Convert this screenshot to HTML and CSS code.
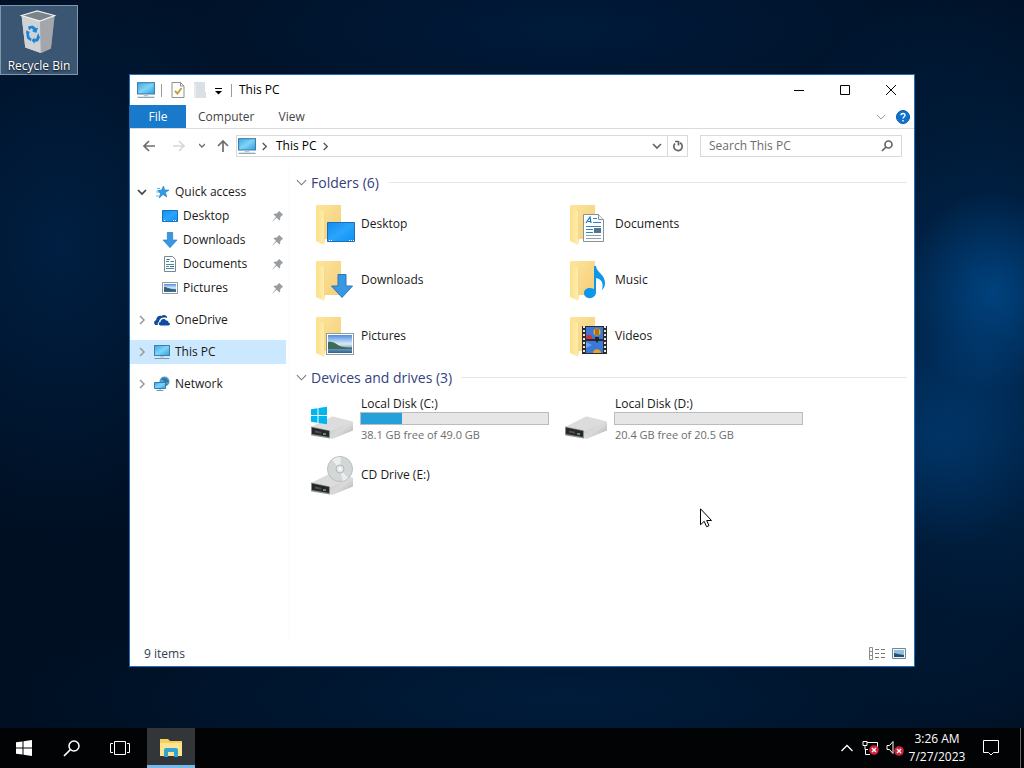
FILE: index.html
```
<!DOCTYPE html>
<html lang="en">
  <head>
    <meta charset="UTF-8" />
    <meta name="viewport" content="width=device-width, initial-scale=1.0" />
    <title>This PC</title>
    <link rel="stylesheet" href="styles.css">
  </head>
  <body>
    <!-- shared icons -->
    <svg class="sprite" aria-hidden="true">
      <defs>
        <linearGradient id="g-screen" x1="0" y1="0" x2="1" y2="1">
          <stop offset="0" stop-color="#3aa9e6" />
          <stop offset="0.5" stop-color="#7fd3f8" />
          <stop offset="1" stop-color="#2f9fe0" />
        </linearGradient>
        <linearGradient id="g-front" x1="0" y1="0" x2="1" y2="0">
          <stop offset="0" stop-color="#fbe08a" />
          <stop offset="1" stop-color="#feecac" />
        </linearGradient>
        <linearGradient id="g-back" x1="0" y1="0" x2="1" y2="1">
          <stop offset="0" stop-color="#fde59c" />
          <stop offset="1" stop-color="#f3cd7a" />
        </linearGradient>
        <linearGradient id="g-desk" x1="0" y1="0" x2="1" y2="1">
          <stop offset="0" stop-color="#0f8df0" />
          <stop offset="0.5" stop-color="#2ba4fb" />
          <stop offset="1" stop-color="#0d92f5" />
        </linearGradient>
        <linearGradient id="g-sky" x1="0" y1="0" x2="0" y2="1">
          <stop offset="0" stop-color="#4f8ede" />
          <stop offset="0.5" stop-color="#dcebf7" />
          <stop offset="0.75" stop-color="#6f9cc0" />
          <stop offset="1" stop-color="#2f618f" />
        </linearGradient>
        <linearGradient id="g-drive" x1="0" y1="0" x2="1" y2="1">
          <stop offset="0" stop-color="#c6c6c6" />
          <stop offset="0.5" stop-color="#dadada" />
          <stop offset="1" stop-color="#a9a9a9" />
        </linearGradient>
        <linearGradient id="g-bin" x1="0" y1="0" x2="1" y2="0">
          <stop offset="0" stop-color="#d9dcdf" />
          <stop offset="0.55" stop-color="#c3c6c9" />
          <stop offset="1" stop-color="#8f959b" />
        </linearGradient>
      </defs>

      <symbol id="i-pc" viewBox="0 0 16 16">
        <rect x="0.5" y="1.5" width="15" height="10" fill="url(#g-screen)" stroke="#3f7fa8" />
        <path d="M6 12h4v1.500H6z" fill="#b5c6d0" />
        <path d="M0.500 14.500h15" stroke="#7d99ab" />
      </symbol>

      <symbol id="i-folder" viewBox="0 0 48 48">
        <path d="M9 5h24v34H13z" fill="url(#g-back)" />
        <path d="M8 5l8 6v34L8 41z" fill="url(#g-front)" />
        <path d="M8 5l9 6v28l-1 6V11z" fill="#f6d885" />
      </symbol>

      <symbol id="i-drive" viewBox="0 0 48 48">
        <path d="M3 32L23 22c1-.5 2-.5 3-.3L43 26c2 .6 2 1 2 2L22 36z" fill="#dcdcdc" />
        <path d="M22 36l23-9v8.500L24 44l-2-1z" fill="url(#g-drive)" />
        <path d="M3 31.500L22 35.500v8L4 40.500q-1 0-1-1z" fill="#8c8e8e" />
        <path d="M4 32.500l17 3.500v6l-17-3z" fill="#24282a" />
        <path d="M15 39h3" stroke="#b7e0c0" />
        <path d="M7 35.500l6 1.300v2L7 37.600z" fill="#4b5052" />
      </symbol>

      <symbol id="i-down" viewBox="0 0 24 24">
        <path d="M8 .5h8V12h6.500L12 23.500 1.500 12H8z" fill="#3a97e4" stroke="#2a76bb" />
      </symbol>

      <symbol id="i-photo" viewBox="0 0 28 22">
        <rect x="0.5" y="0.5" width="27" height="21" fill="#fff" stroke="#8f9aa3" />
        <rect x="2" y="2" width="24" height="18" fill="url(#g-sky)" />
        <path d="M2 9c4-1 7 1 10 3s7 2.500 14 2.500V16H2z" fill="#3c6b58" />
      </symbol>

      <symbol id="i-pin" viewBox="0 0 12 12">
        <path d="M7 .7L11.300 5l-1.200.3-1.800 1.900-.2 2.600-.9.400L4.700 7.700.8 11.200.5 11l3.500-4-2.300-2.400.4-.9 2.600-.1L6.600 1.800z" fill="#979da2" />
      </symbol>

      <symbol id="i-right" viewBox="0 0 10 10">
        <path d="M3 1l4 4-4 4" fill="none" stroke="currentColor" stroke-width="1.500" />
      </symbol>

      <symbol id="i-chev" viewBox="0 0 12 12">
        <path d="M1 3.500l5 5 5-5" fill="none" stroke="currentColor" stroke-width="1.200" />
      </symbol>

      <symbol id="i-lens" viewBox="0 0 18 18">
        <circle cx="11" cy="7" r="5" fill="none" stroke="currentColor" stroke-width="1.500" />
        <path d="M7.500 10.500L1 17" stroke="currentColor" stroke-width="1.700" />
      </symbol>

      <symbol id="i-error" viewBox="0 0 10 10">
        <circle cx="5" cy="5" r="4.800" fill="#d0213c" />
        <path d="M3 3l4 4M7 3L3 7" stroke="#fff" stroke-width="1.300" />
      </symbol>
    </svg>

    <main class="desktop">
      <a class="shortcut" href="#">
        <svg viewBox="0 0 48 48">
          <path d="M5 6L22 1l19 5-4 36-11 5-17-6z" fill="url(#g-bin)" />
          <path d="M5 6l20 6 1 35-17-6z" fill="#d0d3d6" />
          <path d="M25 12l16-6-4 36-11 5z" fill="#a3a7ab" />
          <path d="M5 6L22 1l19 5-16 6z" fill="#7b8288" stroke="#eef0f1" stroke-width="1.300" />
          <g fill="#1c83d8">
            <path d="M12 18l5-1 4 3 2-1-2 6-5-2 2-1-2-2-3 2z" />
            <path d="M10 22l4 2-1 2 1 4 2 1-1 3-4-3-1-6z" />
            <path d="M23 25l2 5-2 4-4 1v2l-3-4 3-3v2l2-1z" />
          </g>
        </svg>
        <span>Recycle Bin</span>
      </a>

      <section class="window">
        <header class="titlebar">
          <svg class="pc-icon"><use href="#i-pc" /></svg>
          <span class="divider"></span>
          <button class="quick" aria-label="Properties">
            <svg width="14" height="16" viewBox="0 0 14 16">
              <path d="M1 .5h8.500l3.500 3.500v11.500H1z" fill="#fdfdfd" stroke="#8f8f8f" />
              <path d="M9.500.5V4H13" fill="none" stroke="#8f8f8f" />
              <path d="M4 9l2.500 2.500L10.500 6" fill="none" stroke="#c79a3c" stroke-width="1.800" />
            </svg>
          </button>
          <button class="quick" aria-label="New folder">
            <svg width="14" height="16" viewBox="0 0 14 16">
              <path d="M1 0h11v10h1v6H1z" fill="#d9e0e6" />
              <path d="M1 1.500l2 1V16H1z" fill="#e6ebef" />
            </svg>
          </button>
          <button class="quick narrow" aria-label="Customize toolbar">
            <svg width="7" height="7" viewBox="0 0 7 7">
              <path d="M0 .5h7" stroke="#000" />
              <path d="M0 3h7L3.500 6.500z" />
            </svg>
          </button>
          <span class="divider"></span>
          <h1>This PC</h1>
          <div class="controls">
            <button aria-label="Minimize">
              <svg width="10" height="10"><path d="M0 5.500h10" /></svg>
            </button>
            <button aria-label="Maximize">
              <svg width="10" height="10"><path d="M.5.5h9v9h-9z" /></svg>
            </button>
            <button aria-label="Close">
              <svg width="10" height="10"><path d="M0 0l10 10M10 0L0 10" /></svg>
            </button>
          </div>
        </header>

        <nav class="ribbon">
          <button class="file">File</button>
          <button>Computer</button>
          <button>View</button>
          <div class="ribbon-end">
            <svg class="expand" width="10" height="10"><use href="#i-chev" /></svg>
            <svg width="14" height="14" viewBox="0 0 14 14">
              <circle cx="7" cy="7" r="6.500" fill="#0c74cf" stroke="#0b5aa3" />
              <path d="M5 5.300C5 2.800 9.200 2.900 9 5.300 8.900 6.800 7 6.800 7 8.600M7 10v1.500" fill="none" stroke="#fff" stroke-width="1.400" />
            </svg>
          </div>
        </nav>

        <div class="toolbar">
          <button class="go" aria-label="Back">
            <svg width="12" height="12"><path d="M12 6H1M6 1L1 6l5 5" /></svg>
          </button>
          <button class="go off" aria-label="Forward" disabled>
            <svg width="12" height="12"><path d="M0 6h11M6 1l5 5-5 5" /></svg>
          </button>
          <button class="go recent" aria-label="Recent locations">
            <svg width="6" height="6"><path d="M0 1l3 3 3-3" /></svg>
          </button>
          <button class="go up" aria-label="Up">
            <svg width="12" height="12"><path d="M6 12V1M1 6l5-5 5 5" /></svg>
          </button>
          <div class="address">
            <svg class="pc-icon"><use href="#i-pc" /></svg>
            <svg class="crumb-arrow"><use href="#i-right" /></svg>
            <a href="#">This PC</a>
            <svg class="crumb-arrow"><use href="#i-right" /></svg>
            <button class="drop" aria-label="Previous locations">
              <svg width="10" height="10" viewBox="0 0 10 10"><path d="M1 3l4 4 4-4" /></svg>
            </button>
            <button class="refresh" aria-label="Refresh">
              <svg width="12" height="12" viewBox="0 0 12 12"><path d="M3 3.500A4.200 4.200 0 1 0 8 2.700M3 1.500h3.500M6.500 1v4.500" /></svg>
            </button>
          </div>
          <form class="search">
            <input type="text" placeholder="Search This PC" aria-label="Search This PC">
            <svg width="12" height="12" viewBox="0 0 12 12">
              <circle cx="7.500" cy="4.500" r="3.500" />
              <path d="M5 7L1 11" />
            </svg>
          </form>
        </div>

        <div class="content">
          <nav class="tree">
            <ul>
              <li>
                <a href="#">
                  <svg class="arrow open" viewBox="0 0 10 10"><path d="M1 3l4 4 4-4" fill="none" stroke="currentColor" stroke-width="1.700" /></svg>
                  <svg class="tree-icon" viewBox="0 0 16 16">
                    <path d="M9.500 2l1.200 3.900 4.300.2-3.500 2.500 1.300 4.400-3.800-2.400L5.200 14l1.200-4.400-2.900-3.100 4.100-.4z" fill="#2e9be2" stroke="#1d7dc2" stroke-width=".6" />
                    <path d="M3 4.500h3M2 8h3M2 12h3" stroke="#6bb8ea" />
                  </svg>
                  Quick access
                </a>
                <ul>
                  <li>
                    <a href="#">
                      <svg class="tree-icon" viewBox="0 0 16 16"><path d="M.5 2.500h15v11H.5z" fill="url(#g-desk)" stroke="#1673bd" /><path d="M2 12.500h2M11 12.500h3" stroke="#fff" stroke-dasharray="1" /></svg>
                      Desktop
                      <svg class="pin"><use href="#i-pin" /></svg>
                    </a>
                  </li>
                  <li>
                    <a href="#">
                      <svg class="tree-icon"><use href="#i-down" /></svg>
                      Downloads
                      <svg class="pin"><use href="#i-pin" /></svg>
                    </a>
                  </li>
                  <li>
                    <a href="#">
                      <svg class="tree-icon" viewBox="0 0 16 16">
                        <path d="M2.500.5h8l3 3v12h-11z" fill="#fff" stroke="#7d878e" />
                        <path d="M4 5.500h3M8.500 5.500H12M4 8.500h8M4 10.500h3M4 12.500h8" stroke="#3e8f9c" />
                        <path d="M4.500 3.500h3M8 10.500h4" stroke="#2d6591" />
                      </svg>
                      Documents
                      <svg class="pin"><use href="#i-pin" /></svg>
                    </a>
                  </li>
                  <li>
                    <a href="#">
                      <svg class="tree-icon" viewBox="0 0 16 16">
                        <path d="M.5 2.500h15v11H.5z" fill="#fff" stroke="#8f9aa3" />
                        <path d="M2 4h12v8H2z" fill="url(#g-sky)" />
                        <path d="M2 7c3 0 5 2 12 2.500V11H2z" fill="#35617a" />
                      </svg>
                      Pictures
                      <svg class="pin"><use href="#i-pin" /></svg>
                    </a>
                  </li>
                </ul>
              </li>
              <li>
                <a href="#">
                  <svg class="arrow"><use href="#i-right" /></svg>
                  <svg class="tree-icon" viewBox="0 0 16 16">
                    <path d="M1.500 13C-.5 12-.3 8.500 2.200 8.200 2 5 5 3 7.500 4c2-2 5.500-1 5.800 2C8 4.500 5 7 5 10c-1.500.5-1.500 2-1 3z" fill="#0f4b9f" />
                    <path d="M6.500 13.500C4 13 4.500 10 6.500 10 6.500 7 10.500 6 12 8.500c2-.3 2.500 1 2.300 2 2.200.3 2.200 3 0 3z" fill="#0f4b9f" />
                  </svg>
                  OneDrive
                </a>
              </li>
              <li>
                <a class="current" href="#">
                  <svg class="arrow"><use href="#i-right" /></svg>
                  <svg class="tree-icon"><use href="#i-pc" /></svg>
                  This PC
                </a>
              </li>
              <li>
                <a href="#">
                  <svg class="arrow"><use href="#i-right" /></svg>
                  <svg class="tree-icon" viewBox="0 0 16 16">
                    <circle cx="10.500" cy="5.500" r="5" fill="#5b9cc6" />
                    <path d="M7 3c3-3 7 0 8 3l-4 1-2-3zM10 8l4 0-3 2z" fill="#2d78ad" />
                    <path d="M.5 6.500h11v6H.5z" fill="url(#g-screen)" stroke="#2f7eb0" />
                    <path d="M6 13v1.500M2.500 14.500h7" stroke="#7b99ab" />
                  </svg>
                  Network
                </a>
              </li>
            </ul>
          </nav>

          <div class="files">
            <section>
              <h2><svg class="fold"><use href="#i-chev" /></svg>Folders (6)</h2>
              <div class="tiles">
                <a class="tile" href="#">
                  <svg viewBox="0 0 48 48">
                    <use href="#i-folder" />
                    <path d="M19.500 22.500h27v19h-27z" fill="url(#g-desk)" stroke="#1a6fb5" />
                    <path d="M21 40.500h4M41 40.500h5" stroke="#fff" stroke-dasharray="1" />
                  </svg>
                  Desktop
                </a>
                <a class="tile" href="#">
                  <svg viewBox="0 0 48 48">
                    <use href="#i-folder" />
                    <path d="M21.500 14.500h15l5 5v22h-20z" fill="#fff" stroke="#87939b" />
                    <path d="M36.500 14.500v5h5" fill="#e9eef1" stroke="#87939b" />
                    <path d="M24 23l4-6 1 6M26 21.500h3" fill="none" stroke="#1f6fb8" stroke-width="1.200" />
                    <path d="M31 18.500h4M31 22.500h8M24 26.500h15M24 29.500h7M24 32.500h7" stroke="#2f84c4" />
                    <path d="M24 35.500h15M24 38.500h15" stroke="#8ca2b0" />
                    <path d="M32 28h7v5h-7z" fill="#4f7784" />
                  </svg>
                  Documents
                </a>
                <a class="tile" href="#">
                  <svg viewBox="0 0 48 48">
                    <use href="#i-folder" />
                    <use href="#i-down" x="22" y="18" width="24" height="24" />
                  </svg>
                  Downloads
                </a>
                <a class="tile" href="#">
                  <svg viewBox="0 0 48 48">
                    <use href="#i-folder" />
                    <path d="M32 10h2c0 6 9 8 9 17 0 3-1 5-3 7 2-8-1-11-6-12v14c0 8-12 8-12 1 0-5 6-6 10-4z" fill="#0e97ea" />
                  </svg>
                  Music
                </a>
                <a class="tile" href="#">
                  <svg viewBox="0 0 48 48">
                    <use href="#i-folder" />
                    <use href="#i-photo" x="18" y="21" width="28" height="22" />
                  </svg>
                  Pictures
                </a>
                <a class="tile" href="#">
                  <svg viewBox="0 0 48 48">
                    <use href="#i-folder" />
                    <path d="M20 14h25v28H20z" fill="#2b2b2b" />
                    <path d="M22 14v28M43 14v28" stroke="#e8e8e8" stroke-width="2" stroke-dasharray="2" />
                    <path d="M24 15h17v12H24zM24 29h17v12H24z" fill="#3b78d8" />
                    <path d="M24 23h5l2 4h-7z" fill="#d3303b" />
                    <circle cx="35" cy="20" r="3.500" fill="#e8b21f" />
                    <path d="M34 17v6M36 17v6" stroke="#7a3010" />
                    <path d="M33 25h4v3l-2 3-2-3z" fill="#2a2320" />
                    <path d="M31 41c0-5 8-5 8 0z" fill="#e8a51f" />
                    <path d="M24 30l6 3-6 3z" fill="#6fa5ea" />
                  </svg>
                  Videos
                </a>
              </div>
            </section>

            <section>
              <h2><svg class="fold"><use href="#i-chev" /></svg>Devices and drives (3)</h2>
              <div class="tiles">
                <a class="tile" href="#">
                  <svg viewBox="0 0 48 48">
                    <use href="#i-drive" />
                    <path d="M3 14.300l6.500-1V20H3zM10.500 13.100l8.500-1.300V20h-8.500zM3 21h6.500v6.700l-6.500-1zM10.500 21H19v8.200l-8.500-1.300z" fill="#00b6ee" />
                  </svg>
                  <span class="disk">
                    Local Disk (C:)
                    <span class="usage"><span style="width: 22%"></span></span>
                    <small>38.1 GB free of 49.0 GB</small>
                  </span>
                </a>
                <a class="tile" href="#">
                  <svg viewBox="0 0 48 48"><use href="#i-drive" /></svg>
                  <span class="disk">
                    Local Disk (D:)
                    <span class="usage"><span style="width: 0%"></span></span>
                    <small>20.4 GB free of 20.5 GB</small>
                  </span>
                </a>
                <a class="tile" href="#">
                  <svg viewBox="0 0 48 48">
                    <use href="#i-drive" />
                    <circle cx="32" cy="18" r="12.500" fill="#d4d7d7" stroke="#b9bdbd" />
                    <path d="M32 18L24 9a12 12 0 0 1 9-3zM32 18l8 9a12 12 0 0 1-5 3z" fill="#eceeee" />
                    <circle cx="32" cy="18" r="4" fill="#e6e8e8" stroke="#b4b8b8" />
                    <circle cx="32" cy="18" r="1.500" fill="#fff" />
                  </svg>
                  CD Drive (E:)
                </a>
              </div>
            </section>
          </div>
        </div>

        <footer class="statusbar">
          <span>9 items</span>
          <div class="views">
            <button aria-label="Details view">
              <svg width="16" height="14" viewBox="0 0 16 14">
                <path d="M.5.500h3v12h-3zM.5 4.500h3M.5 8.500h3" fill="none" stroke="#8b8b8b" />
                <path d="M6 2.500h4M12 2.500h4M6 6.500h4M12 6.500h4M6 10.500h4M12 10.500h4" stroke="#777" />
              </svg>
            </button>
            <button aria-label="Large icons view">
              <svg width="14" height="12" viewBox="0 0 14 12">
                <path d="M.5.500h13v10H.5z" fill="#eef7fc" stroke="#6f8796" />
                <path d="M2 2h10v7H2z" fill="#8fc0e2" />
                <path d="M2 5l4 1 6 1v2H2z" fill="#26506b" />
              </svg>
            </button>
          </div>
        </footer>
      </section>

      <svg class="cursor" viewBox="0 0 12 20">
        <path d="M.5.8v16l3.700-3.500 2.300 5.400 2.500-1-2.300-5.200h4.800z" fill="#fff" stroke="#000" />
      </svg>
    </main>

    <footer class="taskbar">
      <button aria-label="Start">
        <svg width="16" height="16" viewBox="0 0 16 16"><path d="M0 2.300l6.500-.9v6.100H0zM7.500 1.200L16 0v7.500H7.500zM0 8.500h6.500v6.100L0 13.700zM7.500 8.500H16V16l-8.500-1.200z" fill="#fff" /></svg>
      </button>
      <button aria-label="Search">
        <svg width="18" height="18"><use href="#i-lens" /></svg>
      </button>
      <button aria-label="Task view">
        <svg width="20" height="14" viewBox="0 0 20 14"><path d="M4.500.5h11v13h-11zM3 2.500H.5v9H3M17 2.500h2.500v9H17" fill="none" stroke="#fff" /></svg>
      </button>
      <button class="active" aria-label="File Explorer">
        <svg width="22" height="20" viewBox="0 0 22 20">
          <path d="M0 1h8l2 2h12v15H0z" fill="#f3cf63" />
          <path d="M0 5h22v13H0z" fill="#fde38f" />
          <path d="M4 18v-6q0-2 2-2h10q2 0 2 2v7h-4v-5H8v5H4z" fill="#2fa3d3" />
        </svg>
      </button>
      <div class="tray">
        <button aria-label="Show hidden icons">
          <svg width="12" height="8" viewBox="0 0 12 8"><path d="M.5 7L6 1.500 11.500 7" fill="none" stroke="#fff" stroke-width="1.300" /></svg>
        </button>
        <button aria-label="Network">
          <svg width="18" height="16" viewBox="0 0 18 16">
            <path d="M1 1.500h4v4H1zM5 2.500h10.500v8H8M3 6v3.500h3M3.500 9v5.500H8" fill="none" stroke="#fff" />
            <use href="#i-error" x="7" y="5" width="10" height="10" />
          </svg>
        </button>
        <button aria-label="Volume">
          <svg width="18" height="16" viewBox="0 0 18 16">
            <path d="M1 5.500h2.500l3.500-4v12l-3.500-4H1z" fill="none" stroke="#fff" />
            <use href="#i-error" x="8" y="6" width="10" height="10" />
          </svg>
        </button>
        <time datetime="2023-07-27T03:26">3:26 AM<br>7/27/2023</time>
        <button class="notify" aria-label="Notifications">
          <svg width="16" height="16" viewBox="0 0 16 16"><path d="M.5.500h15v12h-5L8 15l-2.500-2.500h-5z" fill="none" stroke="#fff" /></svg>
        </button>
      </div>
    </footer>
  </body>
</html>
```
FILE: styles.css
```
* {
  box-sizing: border-box;
}

body {
  display: flex;
  flex-direction: column;
  min-height: 100vh;
  margin: 0;
  color: #1a1a1a;
  font-family: "Open Sans", "Noto Sans", sans-serif;
  font-size: 12px;
  line-height: 16px;
  background:
    radial-gradient(ellipse 90px 100px at 97% 38%, rgba(0, 84, 156, 0.6), transparent),
    radial-gradient(ellipse 110px 110px at 92% 57%, rgba(0, 74, 140, 0.45), transparent),
    radial-gradient(ellipse 260px 380px at 96% 46%, rgba(0, 52, 104, 0.75), transparent),
    radial-gradient(ellipse 520px 130px at 55% 4%, rgba(0, 36, 80, 0.55), transparent),
    radial-gradient(ellipse 560px 120px at 55% 91%, rgba(0, 34, 70, 0.7), transparent),
    radial-gradient(ellipse 220px 300px at 6% 32%, rgba(0, 38, 80, 0.7), transparent),
    #000f22;
}

svg {
  display: block;
  flex: none;
}

button {
  display: flex;
  align-items: center;
  justify-content: center;
  padding: 0;
  border: 0;
  background: none;
  color: inherit;
  font: inherit;
}

a {
  color: inherit;
  text-decoration: none;
}

ul {
  list-style: none;
  margin: 0;
  padding: 0;
}

.sprite {
  position: absolute;
  width: 0;
  height: 0;
}

.desktop {
  position: relative;
  flex: 1;
  display: flex;
  padding: 74px 109px 61px 129px;
}

.shortcut {
  position: absolute;
  top: 5px;
  left: 0;
  width: 78px;
  height: 70px;
  padding-top: 4px;
  display: flex;
  flex-direction: column;
  align-items: center;
  gap: 4px;
  border: 1px solid #7f96ab;
  background: #3b5673;
  color: #fff;
  text-shadow: 0 1px 2px #000;
}
.shortcut svg {
  width: 44px;
  height: 44px;
}

.window {
  flex: 1;
  min-width: 0;
  display: flex;
  flex-direction: column;
  border: 1px solid #1b6fb8;
  background: #fff;
}

/* title bar */
.titlebar {
  display: flex;
  align-items: center;
  height: 30px;
  padding-left: 7px;
}
.titlebar h1 {
  margin: 0 0 0 7px;
  color: #000;
  font-size: 12px;
  font-weight: normal;
}
.pc-icon {
  width: 18px;
  height: 18px;
}
.divider {
  width: 1px;
  height: 13px;
  margin-left: 6px;
  background: #9a9a9a;
}
.quick {
  width: 22px;
  height: 24px;
  margin-left: 5px;
}
.quick + .quick {
  margin-left: 0;
}
.quick.narrow {
  width: 14px;
  padding-top: 2px;
}
.controls {
  display: flex;
  align-self: stretch;
  margin-left: auto;
}
.controls button {
  width: 46px;
}
.controls svg,
.go svg,
.drop svg,
.refresh svg,
.search svg {
  fill: none;
  stroke: #000;
}

/* ribbon tabs */
.ribbon {
  display: flex;
  height: 24px;
  border-bottom: 1px solid #dadbdc;
  color: #444;
}
.ribbon > button {
  padding: 0 12px;
}
.ribbon .file {
  width: 56px;
  background: #1979ca;
  color: #fff;
}
.ribbon-end {
  display: flex;
  align-items: center;
  gap: 10px;
  margin-left: auto;
  padding-right: 4px;
}
.expand {
  color: #999;
}

/* navigation row */
.toolbar {
  display: flex;
  align-items: center;
  height: 34px;
  padding: 0 12px 0 4px;
}
.go {
  width: 30px;
  height: 22px;
}
.go svg {
  stroke: #6d6d6d;
  stroke-width: 1.7;
}
.go.off svg {
  stroke: #d8d8d8;
}
.go.recent {
  width: 16px;
}
.go.recent svg {
  stroke-width: 1.3;
}
.go.up {
  width: 26px;
}
.address {
  flex: 1;
  min-width: 0;
  display: flex;
  align-items: center;
  height: 22px;
  padding-left: 1px;
  border: 1px solid #d9d9d9;
}
.address a {
  color: #000;
}
.crumb-arrow {
  width: 9px;
  height: 9px;
  margin: 0 7px 0 4px;
  color: #555;
}
.drop,
.refresh {
  align-self: stretch;
  width: 20px;
}
.drop {
  margin-left: auto;
}
.drop svg,
.refresh svg,
.search svg {
  stroke: #666;
  stroke-width: 1.7;
}
.refresh {
  border-left: 1px solid #d9d9d9;
}
.search {
  display: flex;
  align-items: center;
  width: 202px;
  height: 22px;
  margin-left: 12px;
  padding: 0 8px;
  border: 1px solid #d9d9d9;
}
.search input {
  flex: 1;
  min-width: 0;
  padding: 0;
  border: 0;
  outline: 0;
  background: none;
  font: inherit;
}
.search input::placeholder {
  color: #6d6d6d;
}

/* navigation pane */
.content {
  flex: 1;
  display: flex;
}
.tree {
  width: 160px;
  padding: 17px 3px 0 0;
  border-right: 1px solid #fafafa;
}
.tree > ul {
  display: flex;
  flex-direction: column;
  gap: 8px;
}
.tree a {
  display: flex;
  align-items: center;
  height: 24px;
  padding-left: 7px;
}
.tree ul ul a {
  padding-left: 32px;
}
.tree a.current {
  background: #cce8ff;
}
.arrow {
  width: 10px;
  height: 10px;
  margin-right: 7px;
  color: #999;
}
.arrow.open {
  color: #404040;
}
.tree-icon {
  width: 16px;
  height: 16px;
  margin-right: 5px;
}
.pin {
  width: 12px;
  height: 12px;
  margin-left: auto;
  margin-right: 2px;
}

/* file list */
.files {
  flex: 1;
  min-width: 0;
  padding: 6px 7px 0 6px;
}
.files h2 {
  display: flex;
  align-items: center;
  height: 27px;
  margin: 0;
  color: #34427c;
  font-size: 14px;
  font-weight: normal;
}
.files h2::after {
  content: "";
  flex: 1;
  height: 1px;
  margin-left: 9px;
  background: #e8e8e8;
}
.fold {
  width: 11px;
  height: 11px;
  margin-right: 4px;
  color: #777;
}
.tiles {
  display: grid;
  grid-template-columns: repeat(auto-fill, 254px);
  padding-left: 12px;
}
.tile {
  display: flex;
  align-items: center;
  gap: 5px;
  height: 56px;
}
.tile > svg {
  width: 48px;
  height: 48px;
}
.disk {
  width: 188px;
}
.usage {
  display: block;
  height: 13px;
  margin: 0 0 2px -1px;
  border: 1px solid #bcbcbc;
  background: #e6e6e6;
}
.usage span {
  display: block;
  height: 11px;
  background: #26a0da;
}
.disk small {
  display: block;
  color: #6d6d6d;
  font-size: 11px;
}

/* status bar */
.statusbar {
  display: flex;
  align-items: center;
  justify-content: space-between;
  height: 24px;
  padding: 0 8px 0 14px;
  color: #333d55;
}
.views {
  display: flex;
  gap: 7px;
}

.cursor {
  position: absolute;
  left: 700px;
  top: 508px;
  width: 12px;
  height: 20px;
}

/* taskbar */
.taskbar {
  display: flex;
  height: 40px;
  padding-right: 3px;
  background: #020305;
  color: #fff;
}
.taskbar > button {
  width: 48px;
}
.taskbar > button + .active {
  margin-left: 3px;
  border-top: 3px solid #333638;
  border-bottom: 3px solid #76b9ed;
  background: #333638;
}
.tray {
  display: flex;
  margin-left: auto;
  border-right: 1px solid #6a6c6e;
}
.tray button {
  width: 24px;
}
.tray time {
  width: 60px;
  padding-top: 2px;
  line-height: 18px;
  text-align: center;
}
.tray .notify {
  width: 48px;
  margin-right: 5px;
}
```
